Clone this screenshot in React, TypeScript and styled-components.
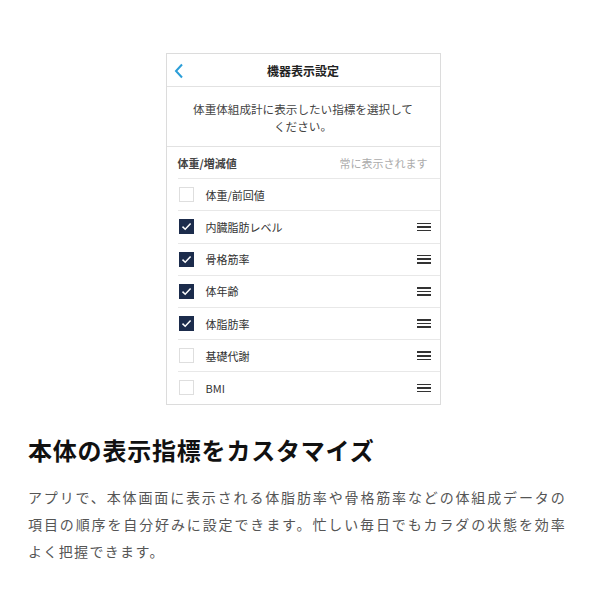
import React from 'react'
import styled, { createGlobalStyle } from 'styled-components'

const GlobalStyle = createGlobalStyle`
  body {
    margin: 0;
    background: #fff;
    font-family: "Noto Sans CJK JP", "Noto Sans", sans-serif;
  }
`

const Page = styled.main`
  width: 550px;
  padding: 53px 0 0 28px;
`

const Phone = styled.section`
  width: 273px;
  margin: 0 auto;
  border: 1px solid #dcdcdc;
  background: #fff;
`

const NavBar = styled.header`
  position: relative;
  height: 32px;
  display: flex;
  align-items: center;
  justify-content: center;
  border-bottom: 1px solid #e2e2e2;
`

const BackButton = styled.button`
  position: absolute;
  left: 4px;
  top: 8px;
  width: 16px;
  height: 18px;
  padding: 0;
  border: 0;
  background: none;
  display: flex;
  align-items: center;
  justify-content: center;
`

const Title = styled.h1`
  margin: 0;
  font-size: 12px;
  font-weight: 700;
  color: #222;
`

const Lead = styled.p`
  box-sizing: border-box;
  margin: 0;
  height: 60px;
  padding-top: 3px;
  display: flex;
  align-items: center;
  justify-content: center;
  text-align: center;
  font-size: 11.6px;
  line-height: 17px;
  color: #444;
  border-bottom: 1px solid #e2e2e2;
`

const List = styled.ul`
  margin: 0;
  padding: 0;
  list-style: none;
`

const Row = styled.li<{ $last?: boolean }>`
  height: 31.2px;
  display: flex;
  align-items: center;
  margin-left: 11px;
  padding-right: 9px;
  border-bottom: ${({ $last }) => ($last ? 'none' : '1px solid #e8e8e8')};
`

const FixedLabel = styled.span`
  flex: 1;
  font-size: 11px;
  font-weight: 700;
  color: #444;
`

const Note = styled.span`
  font-size: 11px;
  color: #ababab;
  padding-right: 3px;
`

const Box = styled.span<{ $checked: boolean }>`
  width: 15px;
  height: 15px;
  box-sizing: border-box;
  margin-left: 1px;
  display: flex;
  align-items: center;
  justify-content: center;
  background: ${({ $checked }) => ($checked ? '#1c2c4c' : '#fff')};
  border: 1px solid ${({ $checked }) => ($checked ? '#1c2c4c' : '#dedede')};
`

const Label = styled.span`
  flex: 1;
  margin-left: 12px;
  font-size: 11px;
  color: #333;
`

const Grip = styled.span`
  width: 14px;
  display: flex;
  flex-direction: column;
  gap: 2px;

  & > i {
    display: block;
    height: 1.6px;
    background: #333;
  }
`

const Heading = styled.h2`
  margin: 29px 0 0;
  font-size: 24px;
  line-height: 32px;
  font-weight: 700;
  letter-spacing: 0.8px;
  color: #111;
`

const Body = styled.p`
  width: 538px;
  margin: 18px 0 0;
  font-size: 14px;
  line-height: 27px;
  letter-spacing: 1.35px;
  color: #555;
  white-space: nowrap;
`

const Line = styled.span<{ $justify?: boolean }>`
  display: block;
  text-align: left;
  text-align-last: ${({ $justify }) => ($justify ? 'justify' : 'left')};
`

const items = [
  { label: '体重/前回値', checked: false, grip: false },
  { label: '内臓脂肪レベル', checked: true, grip: true },
  { label: '骨格筋率', checked: true, grip: true },
  { label: '体年齢', checked: true, grip: true },
  { label: '体脂肪率', checked: true, grip: true },
  { label: '基礎代謝', checked: false, grip: true },
  { label: 'BMI', checked: false, grip: true },
]

const Check = () => (
  <svg width="11" height="9" viewBox="0 0 11 9">
    <path d="M1.5 4.6 L4.2 7.2 L9.6 1.6" fill="none" stroke="#fff" strokeWidth="1.5" />
  </svg>
)

const App: React.FC = () => (
  <>
    <GlobalStyle />
    <Page>
      <Phone>
        <NavBar>
          <BackButton aria-label="戻る">
            <svg width="10" height="16" viewBox="0 0 10 16">
              <path d="M8 1.5 L2 8 L8 14.5" fill="none" stroke="#2b9ed8" strokeWidth="2" />
            </svg>
          </BackButton>
          <Title>機器表示設定</Title>
        </NavBar>
        <Lead>
          体重体組成計に表示したい指標を選択して
          <br />
          ください。
        </Lead>
        <List>
          <Row>
            <FixedLabel>体重/増減値</FixedLabel>
            <Note>常に表示されます</Note>
          </Row>
          {items.map((item, i) => (
            <Row key={item.label} $last={i === items.length - 1}>
              <Box $checked={item.checked}>{item.checked && <Check />}</Box>
              <Label>{item.label}</Label>
              {item.grip && (
                <Grip>
                  <i />
                  <i />
                  <i />
                </Grip>
              )}
            </Row>
          ))}
        </List>
      </Phone>
      <Heading>本体の表示指標をカスタマイズ</Heading>
      <Body>
        <Line $justify>アプリで、本体画面に表示される体脂肪率や骨格筋率などの体組成データの</Line>
        <Line $justify>項目の順序を自分好みに設定できます。忙しい毎日でもカラダの状態を効率</Line>
        <Line>よく把握できます。</Line>
      </Body>
    </Page>
  </>
)

export default App
